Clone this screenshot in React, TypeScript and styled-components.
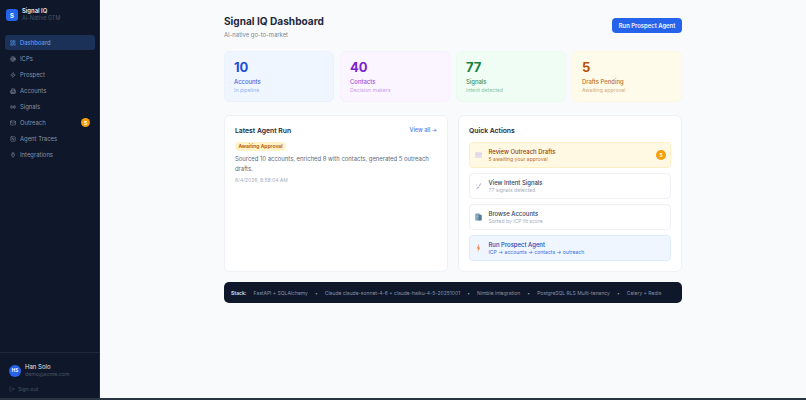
import { ReactNode } from "react";
import styled, { createGlobalStyle } from "styled-components";
import { LayoutDashboard, Target, Zap, Building2, Radio, Mail, SquareActivity, Plug, LogOut } from "lucide-react";

const Global = createGlobalStyle`
	html, body {
		margin: 0;
		height: 100%;
		background: #f8fafc;
		font-family: Inter, "Liberation Sans", sans-serif;
		overflow: hidden;
	}
	* { box-sizing: border-box; }
`;

const Shell = styled("div")`
	width: 806px;
	height: 400px;
	display: flex;
	background: #f8fafc;
	border-bottom: 2px solid #2b3442;
`;

const Sidebar = styled("aside")`
	width: 100px;
	flex: none;
	display: flex;
	flex-direction: column;
	background: #0f172a;
	border-right: 1px solid #1e293b;
`;

const Brand = styled("div")`
	height: 30px;
	padding: 0 6px;
	display: flex;
	align-items: center;
	gap: 4px;
`;

const BrandLogo = styled("div")`
	width: 12px;
	height: 12px;
	border-radius: 3px;
	background: #2563eb;
	color: #fff;
	font-size: 6px;
	font-weight: 700;
	display: grid;
	place-items: center;
`;

const BrandName = styled("div")`
	color: #e2e8f0;
	font-size: 5.9px;
	font-weight: 600;
	line-height: 8px;
`;

const BrandSub = styled("div")`
	color: #475569;
	font-size: 5.5px;
	line-height: 7.5px;
`;

const NavList = styled("nav")`
	margin-top: 5px;
	padding: 0 4px 0 5px;
	display: flex;
	flex-direction: column;
	gap: 1px;
	flex: 1;
`;

const NavItem = styled("div")<{ $active?: boolean }>`
	height: 15px;
	border-radius: 3px;
	padding: 0 5px;
	display: flex;
	align-items: center;
	gap: 4px;
	font-size: 5.9px;
	background: ${({ $active }) => ($active ? "#1b3157" : "transparent")};
	color: ${({ $active }) => ($active ? "#5b9af5" : "#8592a6")};
	font-weight: ${({ $active }) => ($active ? 500 : 400)};
`;

const NavLabel = styled("span")`
	flex: 1;
`;

const NavBadge = styled("span")`
	width: 9px;
	height: 9px;
	border-radius: 50%;
	background: #f59e0b;
	color: #fff;
	font-size: 5px;
	font-weight: 700;
	display: grid;
	place-items: center;
`;

const UserBlock = styled("div")`
	height: 46px;
	border-top: 1px solid #1e293b;
	padding: 10px 9px 0;
`;

const UserRow = styled("div")`
	display: flex;
	align-items: center;
	gap: 4px;
`;

const Avatar = styled("div")`
	width: 12px;
	height: 12px;
	border-radius: 50%;
	background: #2563eb;
	color: #fff;
	font-size: 4.5px;
	font-weight: 700;
	display: grid;
	place-items: center;
`;

const UserName = styled("div")`
	color: #e2e8f0;
	font-size: 6px;
	line-height: 8px;
`;

const UserMail = styled("div")`
	color: #475569;
	font-size: 5.2px;
	line-height: 7px;
`;

const SignOut = styled("div")`
	margin-top: 8px;
	display: flex;
	align-items: center;
	gap: 3px;
	color: #475569;
	font-size: 5.2px;
`;

const Main = styled("main")`
	flex: 1;
	display: flex;
	justify-content: center;
	padding-top: 14px;
`;

const Content = styled("div")`
	width: 458px;
`;

const Header = styled("header")`
	display: flex;
	justify-content: space-between;
	align-items: flex-start;
	height: 37px;
`;

const Title = styled("h1")`
	margin: 0;
	color: #1e293b;
	font-size: 10.1px;
	font-weight: 700;
	line-height: 14px;
`;

const Subtitle = styled("p")`
	margin: 1.5px 0 0;
	color: #7c8898;
	font-size: 5.9px;
	line-height: 9px;
`;

const PrimaryButton = styled("button")`
	margin-top: 4px;
	width: 70px;
	height: 15px;
	border: 0;
	border-radius: 4px;
	padding: 0;
	background: #2563eb;
	color: #f4f7ff;
	font: 600 5.9px Inter, sans-serif;
`;

const Stats = styled("section")`
	display: grid;
	grid-template-columns: repeat(4, 1fr);
	gap: 6px;
`;

const StatCard = styled("div")<{ $bg: string; $border: string }>`
	height: 51px;
	border-radius: 6px;
	padding: 7px 9px 0;
	background: ${({ $bg }) => $bg};
	border: 1px solid ${({ $border }) => $border};
`;

const StatValue = styled("div")<{ $color: string }>`
	color: ${({ $color }) => $color};
	font-size: 13px;
	font-weight: 700;
	line-height: 16px;
`;

const StatLabel = styled("div")<{ $color: string }>`
	margin-top: 3px;
	color: ${({ $color }) => $color};
	font-size: 5.9px;
	font-weight: 500;
	line-height: 8px;
`;

const StatSub = styled("div")<{ $color: string }>`
	color: ${({ $color }) => $color};
	font-size: 5.2px;
	line-height: 8px;
`;

const Panels = styled("section")`
	margin-top: 13px;
	display: grid;
	grid-template-columns: 1fr 1fr;
	gap: 10px;
`;

const Panel = styled("div")`
	height: 157px;
	background: #fff;
	border: 1px solid #eef2f6;
	border-radius: 6px;
	padding: 9px 10px;
`;

const PanelHead = styled("div")`
	display: flex;
	justify-content: space-between;
	align-items: center;
	height: 10px;
`;

const PanelTitle = styled("h2")`
	margin: 0;
	color: #1e293b;
	font-size: 6.8px;
	font-weight: 600;
`;

const ViewAll = styled("span")`
	color: #4a7df0;
	font-size: 5.6px;
	font-weight: 500;
`;

const StatusPill = styled("span")`
	display: block;
	width: fit-content;
	margin-top: 7px;
	padding: 0 3.5px;
	height: 8.5px;
	line-height: 8.5px;
	border-radius: 4px;
	background: #fef3c7;
	color: #b45309;
	font-size: 5px;
	font-weight: 600;
`;

const RunText = styled("p")`
	margin: 3.5px 0 0;
	color: #5c6a7d;
	font-size: 5.9px;
	line-height: 9.7px;
`;

const RunTime = styled("div")`
	margin-top: 2.5px;
	color: #a3afbf;
	font-size: 5px;
	line-height: 8px;
`;

const ActionList = styled("div")`
	margin-top: 7px;
	display: flex;
	flex-direction: column;
	gap: 5px;
`;

const Action = styled("div")<{ $bg: string; $border: string }>`
	height: 26px;
	border-radius: 4px;
	background: ${({ $bg }) => $bg};
	border: 1px solid ${({ $border }) => $border};
	padding: 0 4px 0 5px;
	display: flex;
	align-items: center;
	gap: 6.5px;
`;

const ActionIcon = styled("div")`
	width: 7px;
	display: grid;
	place-items: center;
`;

const ActionBody = styled("div")`
	flex: 1;
`;

const ActionTitle = styled("div")<{ $color: string }>`
	color: ${({ $color }) => $color};
	font-size: 5.95px;
	font-weight: 500;
	line-height: 8px;
`;

const ActionSub = styled("div")<{ $color: string }>`
	color: ${({ $color }) => $color};
	font-size: 5.1px;
	line-height: 7px;
`;

const ActionBadge = styled("span")`
	width: 10px;
	height: 10px;
	border-radius: 50%;
	background: #f59e0b;
	color: #fff;
	font-size: 5px;
	font-weight: 700;
	display: grid;
	place-items: center;
`;

const StackBar = styled("footer")`
	margin-top: 10px;
	height: 21px;
	border-radius: 5px;
	background: #0f172a;
	padding: 0 7px;
	display: flex;
	align-items: center;
	gap: 7px;
	color: #8592a6;
	font-size: 5px;
	white-space: nowrap;
`;

const StackLabel = styled("strong")`
	color: #cbd5e1;
	font-weight: 700;
`;

const navItems = [
	{ label: "Dashboard", Icon: LayoutDashboard, active: true },
	{ label: "ICPs", Icon: Target },
	{ label: "Prospect", Icon: Zap },
	{ label: "Accounts", Icon: Building2 },
	{ label: "Signals", Icon: Radio },
	{ label: "Outreach", Icon: Mail, badge: "5" },
	{ label: "Agent Traces", Icon: SquareActivity },
	{ label: "Integrations", Icon: Plug },
];

const stats = [
	{ value: "10", label: "Accounts", sub: "In pipeline", bg: "#eff6ff", border: "#eaf2fe", main: "#1d4ed8", mid: "#3b6ce0", low: "#8fb3f5" },
	{ value: "40", label: "Contacts", sub: "Decision makers", bg: "#faf5ff", border: "#f7f0fe", main: "#7e22ce", mid: "#9a4fd8", low: "#c9a0ec" },
	{ value: "77", label: "Signals", sub: "Intent detected", bg: "#f0fdf4", border: "#ebfbef", main: "#15803d", mid: "#3d8f5c", low: "#8cc4a2" },
	{ value: "5", label: "Drafts Pending", sub: "Awaiting approval", bg: "#fffbeb", border: "#fef8e0", main: "#b45309", mid: "#b9703a", low: "#d2ab82" },
];

const stack = [
	"FastAPI + SQLAlchemy",
	"•",
	"Claude claude-sonnet-4-6 + claude-haiku-4-5-20251001",
	"•",
	"Nimble Integration",
	"•",
	"PostgreSQL RLS Multi-tenancy",
	"•",
	"Celery + Redis",
];

const InboxGlyph = () => (
	<svg width="7" height="6" viewBox="0 0 7 6">
		<rect width="7" height="6" rx="0.6" fill="#e6dfec" />
		<path d="M0.5 1.5 3.5 3.4 6.5 1.5" stroke="#cfc4da" strokeWidth="0.6" fill="none" />
	</svg>
);

const SatelliteGlyph = () => (
	<svg width="7" height="8" viewBox="0 0 7 8">
		<path d="M1 7.4 3 4.2 4.6 5.4Z" fill="#b9add0" />
		<path d="M3.6 3.8 5.6 1 6.4 1.8 4.6 4.6Z" fill="#c9bedb" />
		<circle cx="1.6" cy="3" r="0.7" fill="#d5cfe2" />
	</svg>
);

const BuildingGlyph = () => (
	<svg width="7" height="8" viewBox="0 0 7 8">
		<rect x="0.3" y="0.4" width="4.4" height="7.2" rx="0.4" fill="#7a9cb5" />
		<rect x="3.4" y="1.8" width="3.3" height="5.8" rx="0.3" fill="#567a97" />
		<path d="M1 2h2.4M1 3.5h2.4M1 5h2.4" stroke="#b4cbdb" strokeWidth="0.5" />
	</svg>
);

const BoltGlyph = () => (
	<svg width="5" height="8" viewBox="0 0 5 8">
		<path d="M3 0 0.6 4.4H2.2L1.6 8 4.4 3.4H2.8Z" fill="#f28a4e" />
	</svg>
);

function ActionRow({ icon, title, sub, bg, border, titleColor, subColor, badge }: {
	icon: ReactNode;
	title: string;
	sub: string;
	bg: string;
	border: string;
	titleColor: string;
	subColor: string;
	badge?: string;
}) {
	return (
		<Action $bg={bg} $border={border}>
			<ActionIcon>{icon}</ActionIcon>
			<ActionBody>
				<ActionTitle $color={titleColor}>{title}</ActionTitle>
				<ActionSub $color={subColor}>{sub}</ActionSub>
			</ActionBody>
			{badge && <ActionBadge>{badge}</ActionBadge>}
		</Action>
	);
}

export default function App() {
	return (
		<Shell>
			<Global />
			<Sidebar>
				<Brand>
					<BrandLogo>S</BrandLogo>
					<div>
						<BrandName>Signal IQ</BrandName>
						<BrandSub>AI-Native GTM</BrandSub>
					</div>
				</Brand>
				<NavList>
					{navItems.map(({ label, Icon, active, badge }) => (
						<NavItem key={label} $active={active}>
							<Icon size={6} strokeWidth={2} />
							<NavLabel>{label}</NavLabel>
							{badge && <NavBadge>{badge}</NavBadge>}
						</NavItem>
					))}
				</NavList>
				<UserBlock>
					<UserRow>
						<Avatar>HS</Avatar>
						<div>
							<UserName>Han Solo</UserName>
							<UserMail>demo@acme.com</UserMail>
						</div>
					</UserRow>
					<SignOut>
						<LogOut size={6} />
						Sign out
					</SignOut>
				</UserBlock>
			</Sidebar>
			<Main>
				<Content>
					<Header>
						<div>
							<Title>Signal IQ Dashboard</Title>
							<Subtitle>AI-native go-to-market</Subtitle>
						</div>
						<PrimaryButton>Run Prospect Agent</PrimaryButton>
					</Header>
					<Stats>
						{stats.map(s => (
							<StatCard key={s.label} $bg={s.bg} $border={s.border}>
								<StatValue $color={s.main}>{s.value}</StatValue>
								<StatLabel $color={s.mid}>{s.label}</StatLabel>
								<StatSub $color={s.low}>{s.sub}</StatSub>
							</StatCard>
						))}
					</Stats>
					<Panels>
						<Panel>
							<PanelHead>
								<PanelTitle>Latest Agent Run</PanelTitle>
								<ViewAll>View all →</ViewAll>
							</PanelHead>
							<StatusPill>Awaiting Approval</StatusPill>
							<RunText>Sourced 10 accounts, enriched 8 with contacts, generated 5 outreach drafts.</RunText>
							<RunTime>6/4/2026, 8:58:04 AM</RunTime>
						</Panel>
						<Panel>
							<PanelHead>
								<PanelTitle>Quick Actions</PanelTitle>
							</PanelHead>
							<ActionList>
								<ActionRow icon={<InboxGlyph />} title="Review Outreach Drafts" sub="5 awaiting your approval" bg="#fff8e3" border="#fdefc4" titleColor="#92400e" subColor="#b9703a" badge="5" />
								<ActionRow icon={<SatelliteGlyph />} title="View Intent Signals" sub="77 signals detected" bg="#fff" border="#eef2f6" titleColor="#334155" subColor="#a3afbf" />
								<ActionRow icon={<BuildingGlyph />} title="Browse Accounts" sub="Sorted by ICP fit score" bg="#fff" border="#eef2f6" titleColor="#334155" subColor="#a3afbf" />
								<ActionRow icon={<BoltGlyph />} title="Run Prospect Agent" sub="ICP → accounts → contacts → outreach" bg="#eff6ff" border="#dfebfd" titleColor="#1e40af" subColor="#3b6ce0" />
							</ActionList>
						</Panel>
					</Panels>
					<StackBar>
						<StackLabel>Stack:</StackLabel>
						{stack.map((item, i) => <span key={i}>{item}</span>)}
					</StackBar>
				</Content>
			</Main>
		</Shell>
	);
}
